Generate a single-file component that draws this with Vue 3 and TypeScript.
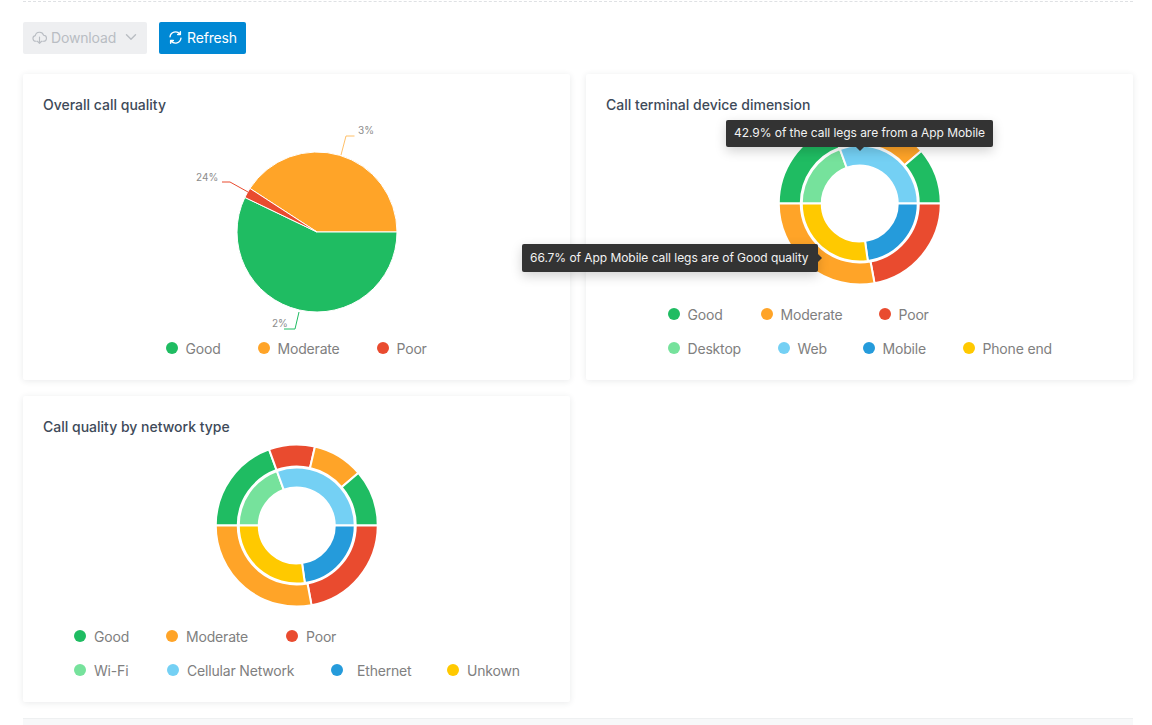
<script setup lang="ts">
const C = {
  good: '#1fbc62',
  moderate: '#ffa428',
  poor: '#e94b2f',
  lgreen: '#76e29c',
  lblue: '#74d0f4',
  blue: '#259bdb',
  yellow: '#ffc900',
}

function pt(cx: number, cy: number, r: number, deg: number): string {
  const a = ((deg - 90) * Math.PI) / 180
  return `${(cx + r * Math.cos(a)).toFixed(2)} ${(cy + r * Math.sin(a)).toFixed(2)}`
}

function arc(cx: number, cy: number, ro: number, ri: number, a0: number, a1: number): string {
  const large = a1 - a0 > 180 ? 1 : 0
  if (ri === 0) {
    return `M${cx} ${cy}L${pt(cx, cy, ro, a0)}A${ro} ${ro} 0 ${large} 1 ${pt(cx, cy, ro, a1)}Z`
  }
  return `M${pt(cx, cy, ro, a0)}A${ro} ${ro} 0 ${large} 1 ${pt(cx, cy, ro, a1)}L${pt(cx, cy, ri, a1)}A${ri} ${ri} 0 ${large} 0 ${pt(cx, cy, ri, a0)}Z`
}

const pie = [
  { d: arc(294, 158, 80, 0, -57, 90), c: C.moderate },
  { d: arc(294, 158, 80, 0, 90, 295.6), c: C.good },
  { d: arc(294, 158, 80, 0, -64.4, -57), c: C.poor },
]

const cx = 99.75
const cy = 90.5
const donut = [
  { d: arc(cx, cy, 81, 59, 270, 340), c: C.good },
  { d: arc(cx, cy, 81, 59, 340, 373), c: C.poor },
  { d: arc(cx, cy, 81, 59, 13, 49.5), c: C.moderate },
  { d: arc(cx, cy, 81, 59, 49.5, 90), c: C.good },
  { d: arc(cx, cy, 81, 59, 90, 169.5), c: C.poor },
  { d: arc(cx, cy, 81, 59, 169.5, 270), c: C.moderate },
  { d: arc(cx, cy, 58, 38, 270, 340), c: C.lgreen },
  { d: arc(cx, cy, 58, 38, 340, 450), c: C.lblue },
  { d: arc(cx, cy, 58, 38, 90, 172), c: C.blue },
  { d: arc(cx, cy, 58, 38, 172, 270), c: C.yellow },
]

interface Item { label: string; color: string; width: number; wide?: boolean }
const quality = (w: number[]): Item[] => [
  { label: 'Good', color: C.good, width: w[0] },
  { label: 'Moderate', color: C.moderate, width: w[1] },
  { label: 'Poor', color: C.poor, width: w[2] },
]

const legend1: Item[][] = [quality([92, 119, 51])]
const legend2: Item[][] = [
  quality([93, 118, 52]),
  [
    { label: 'Desktop', color: C.lgreen, width: 110 },
    { label: 'Web', color: C.lblue, width: 85 },
    { label: 'Mobile', color: C.blue, width: 100 },
    { label: 'Phone end', color: C.yellow, width: 89 },
  ],
]
const legend3: Item[][] = [
  quality([92, 120, 50]),
  [
    { label: 'Wi-Fi', color: C.lgreen, width: 93 },
    { label: 'Cellular Network', color: C.lblue, width: 164 },
    { label: 'Ethernet', color: C.blue, width: 116, wide: true },
    { label: 'Unkown', color: C.yellow, width: 72 },
  ],
]
</script>

<template>
  <div class="page">
    <div class="toolbar">
      <button class="btn btn-disabled" type="button" disabled>
        <svg class="ico" viewBox="0 0 16 16" fill="none" stroke="currentColor" stroke-width="1.2" stroke-linecap="round" stroke-linejoin="round">
          <path d="M4.6 12H4a3 3 0 0 1-.5-5.95A4.6 4.6 0 0 1 12.4 5.6 3.2 3.2 0 0 1 12 12h-.6" />
          <path d="M8 7.5v6.5M5.8 12 8 14.2 10.2 12" />
        </svg>
        <span>Download</span>
        <svg class="chev" viewBox="0 0 12 12" fill="none" stroke="currentColor" stroke-width="1.4" stroke-linecap="round" stroke-linejoin="round">
          <path d="M1.5 3.8 6 8.2l4.500-4.400" />
        </svg>
      </button>
      <button class="btn btn-primary" type="button">
        <svg class="ico" viewBox="0 0 16 16" fill="none" stroke="currentColor" stroke-width="1.5" stroke-linecap="round" stroke-linejoin="round">
          <path d="M2.200 7.200A5.900 5.900 0 0 1 12.600 4.200" />
          <path d="M13.800 8.800A5.900 5.900 0 0 1 3.400 11.800" />
          <path d="M13.200 1.900v2.900h-2.900" fill="currentColor" />
          <path d="M2.800 14.100v-2.900h2.900" fill="currentColor" />
        </svg>
        <span>Refresh</span>
      </button>
    </div>

    <div class="grid">
      <section class="card">
        <h3 class="title">Overall call quality</h3>
        <svg class="chart chart-pie" viewBox="0 0 547 270" width="547" height="270">
          <path v-for="(s, i) in pie" :key="i" :d="s.d" :fill="s.c" stroke="#fff" stroke-width="1" />
          <polyline points="318,81 323,62 331.500,62" fill="none" stroke="#ffc069" stroke-width="1" />
          <polyline points="225,118 207,108 199,108" fill="none" :stroke="C.poor" stroke-width="1" />
          <polyline points="276,238 272,255 261,255" fill="none" :stroke="C.good" stroke-width="1" />
          <text x="335" y="60" class="pct">3%</text>
          <text x="173" y="107" class="pct">24%</text>
          <text x="249" y="253" class="pct">2%</text>
        </svg>
        <div class="legend legend-single">
          <div v-for="(row, r) in legend1" :key="r" class="legend-row">
            <div v-for="it in row" :key="it.label" class="legend-item" :style="{ width: it.width + 'px' }">
              <i class="dot" :style="{ background: it.color }"></i>{{ it.label }}
            </div>
          </div>
        </div>
      </section>

      <section class="card">
        <h3 class="title">Call terminal device dimension</h3>
        <svg class="chart chart-donut" viewBox="0 0 200 180" width="200" height="180">
          <path v-for="(s, i) in donut" :key="i" :d="s.d" :fill="s.c" stroke="#fff" stroke-width="2" />
        </svg>
        <div class="legend">
          <div v-for="(row, r) in legend2" :key="r" class="legend-row">
            <div v-for="it in row" :key="it.label" class="legend-item" :style="{ width: it.width + 'px' }">
              <i class="dot" :style="{ background: it.color }"></i>{{ it.label }}
            </div>
          </div>
        </div>
        <div class="tip tip-top">42.9% of the call legs are from a App Mobile</div>
        <div class="tip tip-left">66.7% of App Mobile call legs are of Good quality</div>
      </section>

      <section class="card">
        <h3 class="title">Call quality by network type</h3>
        <svg class="chart chart-donut" viewBox="0 0 200 180" width="200" height="180">
          <path v-for="(s, i) in donut" :key="i" :d="s.d" :fill="s.c" stroke="#fff" stroke-width="2" />
        </svg>
        <div class="legend">
          <div v-for="(row, r) in legend3" :key="r" class="legend-row">
            <div v-for="it in row" :key="it.label" class="legend-item" :class="{ wide: it.wide }" :style="{ width: it.width + 'px' }">
              <i class="dot" :style="{ background: it.color }"></i>{{ it.label }}
            </div>
          </div>
        </div>
      </section>
    </div>

    <div class="footer"></div>
  </div>
</template>

<style scoped>
.page {
  padding: 0 19px 0 23px;
  height: 725px;
  box-sizing: border-box;
  overflow: hidden;
  font-family: Inter, "Open Sans", sans-serif;
  position: relative;
}
.page::before {
  content: "";
  display: block;
  border-top: 1px dashed #dfe1e4;
  margin-top: 1px;
}
.toolbar {
  display: flex;
  gap: 12px;
  margin-top: 20px;
}
.btn {
  height: 32px;
  border: none;
  border-radius: 2px;
  display: flex;
  align-items: center;
  font: inherit;
  font-size: 14px;
  letter-spacing: -0.15px;
  padding: 0 0 2px;
}
.btn-disabled {
  width: 124px;
  background: #eeeff1;
  color: #b9bdc3;
  padding-left: 9px;
}
.btn-primary {
  width: 87px;
  background: #0088d4;
  color: #fff;
  padding-left: 9px;
}
.ico {
  width: 15px;
  height: 15px;
  margin-right: 4px;
  flex: none;
}
.chev {
  width: 12px;
  height: 12px;
  margin-left: 9px;
}
.grid {
  display: grid;
  grid-template-columns: 547px 547px;
  gap: 16px;
  margin-top: 20px;
}
.card {
  position: relative;
  height: 306px;
  background: #fff;
  box-shadow: 0 1px 6px rgba(40, 50, 60, 0.1);
  border-radius: 2px;
  box-sizing: border-box;
}
.title {
  margin: 0;
  padding: 22px 20px 0;
  font-size: 14px;
  line-height: 18px;
  font-weight: 500;
  color: #3e4a59;
}
.chart {
  display: block;
}
.chart-pie {
  position: absolute;
  left: 0;
  top: 0;
}
.chart-donut {
  margin: 0 auto;
  margin-top: -1px;
}
.pct {
  font-size: 10px;
  fill: #8c8c8c;
}
.legend {
  width: max-content;
  margin: 0 auto;
  margin-top: 4px;
}
.legend-single {
  padding-top: 213px;
}
.legend-row {
  display: flex;
  height: 34px;
  align-items: center;
}
.legend-item {
  display: flex;
  align-items: center;
  font-size: 14px;
  letter-spacing: -0.18px;
  color: #808080;
  white-space: nowrap;
}
.legend-item.wide .dot {
  margin-right: 14px;
}
.dot {
  width: 12px;
  height: 12px;
  border-radius: 50%;
  margin-right: 8px;
  flex: none;
}
.tip {
  position: absolute;
  z-index: 3;
  padding: 0 8px;
  background: #333;
  color: #f2f2f2;
  font-size: 12px;
  letter-spacing: -0.05px;
  border-radius: 2px;
  white-space: nowrap;
  box-shadow: 0 4px 12px rgba(0, 0, 0, 0.18);
  box-sizing: border-box;
}
.tip::after {
  content: "";
  position: absolute;
  width: 0;
  height: 0;
  border: 4px solid transparent;
}
.tip-top {
  left: 140px;
  top: 46px;
  width: 267px;
  height: 27px;
  line-height: 26px;
}
.tip-top::after {
  left: 130px;
  top: 100%;
  border-top-color: #333;
  border-bottom-width: 0;
}
.tip-left {
  left: -64px;
  top: 170px;
  width: 296px;
  height: 28px;
  line-height: 28px;
}
.tip-left::after {
  left: 100%;
  top: 10px;
  border-left-color: #333;
  border-right-width: 0;
}
.footer {
  position: absolute;
  left: 23px;
  right: 19px;
  top: 718px;
  height: 7px;
  background: #f7f8f9;
  border-top: 1px solid #eef0f1;
}
</style>
